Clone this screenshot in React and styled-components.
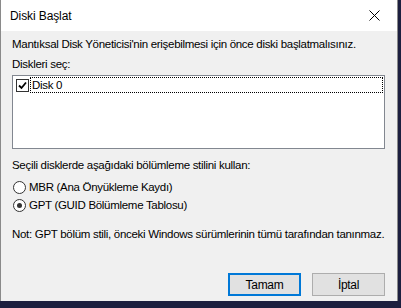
import React from 'react';
import styled, { createGlobalStyle } from 'styled-components';

const GlobalStyle = createGlobalStyle`
  html, body {
    margin: 0;
    padding: 0;
    background: #1d1f3f;
    width: 401px;
    height: 308px;
    overflow: hidden;
  }
  body {
    font-family: "Liberation Sans", Arial, sans-serif;
    font-size: 11.5px;
    letter-spacing: -0.3px;
    color: #000;
  }
`;

const Window = styled.div`
  width: 398px;
  height: 301px;
  background: #f0f0f0;
  border-left: 1px solid #8a8a8a;
  border-right: 1px solid #8a8a8a;
  display: flex;
  flex-direction: column;
  box-sizing: border-box;
`;

const TitleBar = styled.div`
  height: 31px;
  flex-shrink: 0;
  background: #fff;
  display: flex;
  align-items: center;
  justify-content: space-between;
  padding-left: 9px;
`;

const Title = styled.span`
  font-size: 12px;
  letter-spacing: -0.1px;
`;

const CloseButton = styled.div`
  width: 46px;
  height: 31px;
  display: flex;
  align-items: center;
  justify-content: center;
`;

const Body = styled.div`
  flex: 1;
  padding: 6px 12px 0 11px;
  display: flex;
  flex-direction: column;
  white-space: nowrap;
`;

const Label = styled.div`
  line-height: 15px;
  margin-top: ${(p) => p.$top || 0}px;
`;

const ListBox = styled.div`
  margin-top: 3px;
  width: 373px;
  height: 74px;
  box-sizing: border-box;
  background: #fff;
  border: 1px solid #828790;
  padding: 1px;
`;

const ListItem = styled.div`
  display: flex;
  align-items: center;
  height: 16px;
`;

const CheckBox = styled.div`
  width: 11px;
  height: 11px;
  border: 1px solid #333;
  margin: 0 1px 0 2px;
  display: flex;
  align-items: center;
  justify-content: center;
  background: #fff;
`;

const FocusLabel = styled.div`
  flex: 1;
  height: 16px;
  box-sizing: border-box;
  border: 1px dotted #000;
  padding-left: 1px;
  line-height: 14px;
`;

const RadioRow = styled.div`
  display: flex;
  align-items: center;
  height: 18px;
  margin-top: ${(p) => p.$top || 0}px;
`;

const Radio = styled.div`
  width: 11px;
  height: 11px;
  border-radius: 50%;
  border: 1px solid #333;
  background: #fff;
  margin: 0 3px 0 1px;
  display: flex;
  align-items: center;
  justify-content: center;
  &::after {
    content: '';
    width: 5px;
    height: 5px;
    border-radius: 50%;
    background: ${(p) => (p.$checked ? '#333' : 'transparent')};
  }
`;

const ButtonRow = styled.div`
  margin-top: auto;
  margin-bottom: 5px;
  display: flex;
  justify-content: flex-end;
  gap: 11px;
`;

const Button = styled.div`
  width: 73px;
  height: 23px;
  box-sizing: border-box;
  background: #e1e1e1;
  border: ${(p) => (p.$default ? '2px solid #0078d7' : '1px solid #adadad')};
  display: flex;
  align-items: center;
  justify-content: center;
  font-size: 12px;
`;

export default function App() {
  return (
    <>
      <GlobalStyle />
      <Window>
        <TitleBar>
          <Title>Diski Başlat</Title>
          <CloseButton>
            <svg width="11" height="11" viewBox="0 0 11 11">
              <path d="M0.5 0.5 L10.5 10.5 M10.5 0.5 L0.5 10.5" stroke="#000" strokeWidth="1" />
            </svg>
          </CloseButton>
        </TitleBar>
        <Body>
          <Label>Mantıksal Disk Yöneticisi'nin erişebilmesi için önce diski başlatmalısınız.</Label>
          <Label $top={5}>Diskleri seç:</Label>
          <ListBox>
            <ListItem>
              <CheckBox>
                <svg width="9" height="9" viewBox="0 0 9 9">
                  <path d="M1 4.5 L3.5 7 L8 1.5" stroke="#000" strokeWidth="1.8" fill="none" />
                </svg>
              </CheckBox>
              <FocusLabel>Disk 0</FocusLabel>
            </ListItem>
          </ListBox>
          <Label $top={9}>Seçili disklerde aşağıdaki bölümleme stilini kullan:</Label>
          <RadioRow $top={5}>
            <Radio />
            MBR (Ana Önyükleme Kaydı)
          </RadioRow>
          <RadioRow>
            <Radio $checked />
            GPT (GUID Bölümleme Tablosu)
          </RadioRow>
          <Label $top={13}>Not: GPT bölüm stili, önceki Windows sürümlerinin tümü tarafından tanınmaz.</Label>
          <ButtonRow>
            <Button $default>Tamam</Button>
            <Button>İptal</Button>
          </ButtonRow>
        </Body>
      </Window>
    </>
  );
}
